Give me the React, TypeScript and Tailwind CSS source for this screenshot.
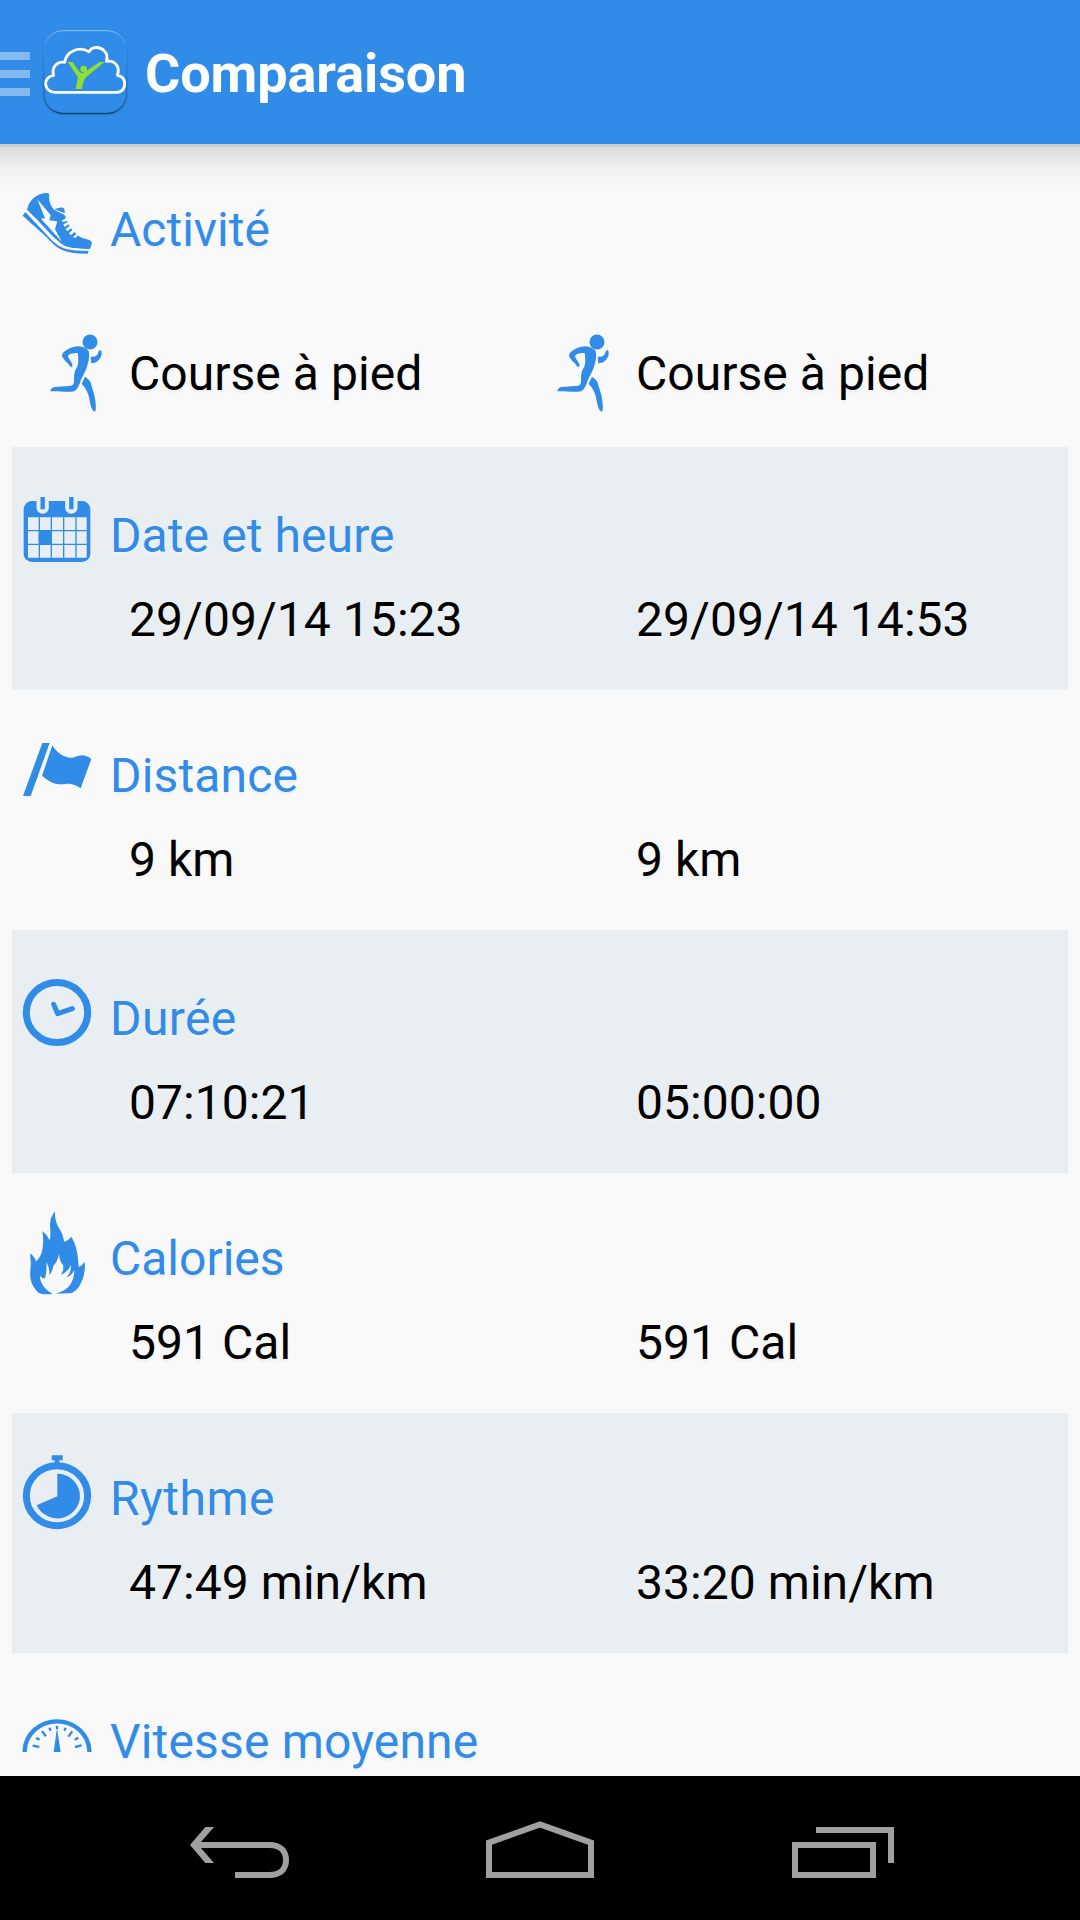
import React from "react";

const BLUE = "#318ce7";

function ShoeIcon() {
  return (
    <svg className="h-[130px] w-[98px] shrink-0" viewBox="36 -78 294 390" fill={BLUE}>
      <path d="M81 120C86 93 108 70 138 69Q148 68 148 74C146 88 149 103 162 119L190 133Q197 136 198 144L184 153L191 156L201 153L204 157L190 163L194 171L206 163L209 168L197 177L202 184L213 175L217 180L207 190L213 196L223 186L229 191L219 202L226 204L234 196C243 205 256 206 268 210Q276 213 275 223L271 235Q269 240 260 239L212 233Q195 231 184 221L158 199L110 148Z" />
      <path d="M163 118L175 114Q190 110 193 117L195 130Z" />
      <path d="M112 88L152 135L148 151L172 154L165 178L186 216L123 146L135 145Z" fill="#f9f9f9" />
      <path d="M76 126L136 190C159 215 174 232 202 238Q232 244 266 242L263 251Q222 252 195 243C172 236 156 220 140 202L68 137Z" />
      <path d="M81 122C105 150 135 184 160 208Q182 232 216 236L272 240" fill="none" stroke="#f9f9f9" strokeWidth="4" />
    </svg>
  );
}

function RunnerIcon() {
  return (
    <svg className="h-[84px] w-[117px] shrink-0" viewBox="36 480 351 252" fill={BLUE}>
      <circle cx="270" cy="516" r="22.5" />
      <path d="M235 529Q256 530 266 543Q270 561 263 583C258 606 247 617 240 638C232 657 227 665 214 665C190 666 165 662 151 664Q151 655 163 651L207 648Q221 648 222 635C223 618 220 607 232 590Q237 574 233 549C217 549 205 552 204 560L217 582Q219 590 215 592Q209 589 203 579Q194 573 187 561Q183 552 195 543Q210 531 235 529Z" />
      <path d="M272 560Q292 563 295 547Q297 539 302 541Q306 543 305 553C302 570 288 580 274 580Z" />
      <path d="M255 620Q273 631 275 648L283 675Q289 703 287 722Q283 728 277 719C270 707 270 689 264 671Q258 654 245 641Z" />
    </svg>
  );
}

function CalendarIcon() {
  return (
    <svg className="h-[130px] w-[98px] shrink-0" viewBox="36 21 294 390" fill="none">
      <rect x="71" y="183" width="200" height="183" rx="25" fill={BLUE} />
      <path d="M84 232H260V353H84Z" fill="#e8eef2" />
      <path d="M118 232V353M154 232V353M191 232V353M228 232V353M84 272H260M84 313H260" stroke={BLUE} strokeWidth="4" />
      <path d="M116 272H156V315H116Z" fill={BLUE} />
      <path d="M128 178V203M214 178V203" stroke="#e8eef2" strokeWidth="37" strokeLinecap="round" />
      <path d="M108 165H148V183H108ZM195 165H233V183H195Z" fill="#e8eef2" />
      <path d="M128 171V208M214 171V208" stroke={BLUE} strokeWidth="13" />
    </svg>
  );
}

function FlagIcon() {
  return (
    <svg className="h-[130px] w-[98px] shrink-0" viewBox="36 -90 294 390" fill={BLUE}>
      <path d="M127 69H149L92 228H69Z" />
      <path d="M157 76C172 101 195 115 218 113C242 104 254 101 274 117L242 205C213 186 203 192 185 193C159 193 142 181 126 167Z" />
    </svg>
  );
}

function ClockIcon() {
  return (
    <svg className="h-[130px] w-[98px] shrink-0" viewBox="36 -60 294 390" fill="none" stroke={BLUE}>
      <ellipse cx="171" cy="187.5" rx="92" ry="90" strokeWidth="21" />
      <path d="M161 163L173 191L217 176" strokeWidth="15" strokeLinecap="round" strokeLinejoin="round" />
    </svg>
  );
}

function FlameIcon() {
  return (
    <svg className="h-[130px] w-[98px] shrink-0" viewBox="36 -51 294 390" fill={BLUE}>
      <path d="M165 64C164 84 168 101 180 119Q190 134 192 156Q206 152 214 140C228 163 234 190 236 231Q249 225 254 215C257 245 250 269 237 290Q223 309 205 310L166 311C198 303 222 286 223 240Q215 257 200 262Q214 247 213 225Q205 245 183 254Q193 238 189 226Q179 214 177 193Q172 217 160 227Q157 247 148 255Q149 232 139 216Q141 245 135 265Q126 266 120 257C119 280 138 302 158 311C138 315 120 313 112 305C94 285 89 267 91 239Q94 222 90 191Q102 196 108 214Q123 201 127 180Q132 151 127 123Q141 133 149 151Q153 134 150 108Q149 83 165 64Z" />
    </svg>
  );
}

function StopwatchIcon() {
  return (
    <svg className="h-[130px] w-[98px] shrink-0" viewBox="36 9 294 390" fill={BLUE}>
      <path d="M155 136H188V151H178V165H164V151H155Z" />
      <ellipse cx="171" cy="257" rx="92" ry="90" fill="none" stroke={BLUE} strokeWidth="21" />
      <path d="M172 191A68 67 0 1 1 110 286L172 259Z" />
    </svg>
  );
}

function GaugeIcon() {
  return (
    <svg className="h-[123px] w-[98px] shrink-0" viewBox="36 9 294 369" fill="none" stroke={BLUE}>
      <path d="M74 306V301C77 252 119 214 171 214C223 214 265 252 268 301V306" strokeWidth="13" />
      <path d="M98 287L118 291M108 264L119 269M126 244L138 259M148 233L152 242M171 227V237M197 233L193 242M217 244L205 260M235 263L224 269M245 286L225 291" strokeWidth="7" />
      <path d="M171 233L182 306H161Z" fill={BLUE} stroke="none" />
    </svg>
  );
}

function AppLogo() {
  return (
    <svg className="h-[90px] w-[86px] shrink-0" viewBox="126 84 258 270" fill="none">
      <defs>
        <linearGradient id="tile-edge" x1="0" y1="0" x2="0" y2="1">
          <stop offset="0" stopColor="#8bbff2" />
          <stop offset="0.18" stopColor="#4294e8" />
          <stop offset="0.5" stopColor="#2c7dce" />
          <stop offset="0.85" stopColor="#2062a3" />
          <stop offset="1" stopColor="#0f3358" />
        </linearGradient>
        <filter id="tile-shadow" x="-10%" y="-10%" width="120%" height="120%">
          <feGaussianBlur stdDeviation="2.5" />
        </filter>
      </defs>
      <rect x="132" y="100" width="247" height="243" rx="58" fill="#174b83" opacity="0.8" filter="url(#tile-shadow)" />
      <rect x="132" y="92" width="247" height="248" rx="58" fill={BLUE} stroke="url(#tile-edge)" strokeWidth="3" />
      <path d="M164 277H350C368 276 375 263 374 249C373 236 365 228 352 226C361 203 347 179 319 184C328 158 305 140 284 143Q273 145 267 155C235 137 199 155 194 187C169 183 154 205 161 226C145 228 136 240 137 253C138 266 150 277 164 277Z" stroke="#fff" strokeWidth="8.5" strokeLinejoin="round" />
      <circle cx="251" cy="207" r="10" fill="#93df31" />
      <path d="M203 186H217L239 216Q245 222 253 217L299 186H313L259 231Q252 237 250 247L245 267H227L233 237Q235 229 229 224Z" fill="#93df31" />
    </svg>
  );
}

type RowProps = {
  icon: React.ReactNode;
  label: string;
  labelClass: string;
  values?: string[];
  rowClass: string;
  valueIcon?: React.ReactNode;
};

function Row({ icon, label, labelClass, values, rowClass, valueIcon }: RowProps) {
  return (
    <section className={"flex flex-col overflow-hidden " + rowClass}>
      <div className="flex h-[130px] shrink-0">
        {icon}
        <h2 className={"mt-[58px] whitespace-nowrap text-[48px] leading-[56px] text-[#318ce7] " + labelClass}>{label}</h2>
      </div>
      {values && (
        <div className={valueIcon ? "mt-14 grid grid-cols-[507px_507px]" : "mt-3 grid grid-cols-[507px_507px] pl-[117px]"}>
          {values.map((v, i) => (
            <div key={i} className="flex whitespace-nowrap text-[48px] leading-[56px] tracking-[0.05px] text-black">
              {valueIcon}
              <span className={valueIcon ? "mt-4" : ""}>{v}</span>
            </div>
          ))}
        </div>
      )}
    </section>
  );
}

export default function App() {
  return (
    <div className="flex h-[1920px] w-[1080px] flex-col overflow-hidden bg-[#f9f9f9] font-['Roboto',sans-serif]">
      <header className="flex h-36 shrink-0 items-start bg-[#318ce7]">
        <div className="mt-[52px] flex w-[30px] flex-col gap-[10px]">
          <div className="h-2 bg-[#83baf0]" />
          <div className="h-2 bg-[#83baf0]" />
          <div className="h-2 bg-[#83baf0]" />
        </div>
        <div className="mt-7 ml-3">
          <AppLogo />
        </div>
        <h1 className="mt-[42px] ml-[17px] text-[54px] leading-[64px] font-bold tracking-[-0.1px] text-white">Comparaison</h1>
      </header>

      <main className="relative h-[1632px] shrink-0 overflow-hidden px-3 [text-shadow:0_3px_1px_#f1f1f1]">
        <div className="absolute inset-x-0 top-0">
          <div className="h-[3px] bg-[#cfcfcf]" />
          <div className="h-[45px] bg-linear-to-b from-black/12 via-black/3 to-transparent" />
        </div>
        <Row icon={<ShoeIcon />} label="Activité" labelClass="" values={["Course à pied", "Course à pied"]} valueIcon={<RunnerIcon />} rowClass="relative h-[303px]" />
        <Row icon={<CalendarIcon />} label="Date et heure" labelClass="pt-[3px] tracking-[0.1px]" values={["29/09/14 15:23", "29/09/14 14:53"]} rowClass="h-[243px] bg-[#e8eef2] [&>div:last-child]:pt-[3px]" />
        <Row icon={<FlagIcon />} label="Distance" labelClass="tracking-[0.15px]" values={["9 km", "9 km"]} rowClass="h-[240px]" />
        <Row icon={<ClockIcon />} label="Durée" labelClass="pt-[3px] tracking-[0.4px]" values={["07:10:21", "05:00:00"]} rowClass="h-[243px] bg-[#e8eef2] [&>div:last-child]:pt-[3px]" />
        <Row icon={<FlameIcon />} label="Calories" labelClass="" values={["591 Cal", "591 Cal"]} rowClass="h-[240px]" />
        <Row icon={<StopwatchIcon />} label="Rythme" labelClass="tracking-[0.5px]" values={["47:49 min/km", "33:20 min/km"]} rowClass="h-[240px] bg-[#e8eef2]" />
        <Row icon={<GaugeIcon />} label="Vitesse moyenne" labelClass="pt-[3px] tracking-[0.18px]" rowClass="h-[123px]" />
      </main>

      <nav className="flex h-36 shrink-0 items-start bg-black" aria-label="Navigation">
        <svg className="mt-[44px] ml-[186px] h-[64px] w-[108px]" viewBox="78 120 324 192" fill="none">
          <path d="M110 195H328C360 195 378 212 378 240C378 268 360 285 328 285H225" stroke="#a0a0a0" strokeWidth="18" />
          <path d="M136 141H162L115 195L162 249H136L90 195Z" fill="#a0a0a0" />
        </svg>
        <svg className="mt-[44px] ml-[188px] h-[64px] w-[116px]" viewBox="966 120 348 192" fill="none">
          <path d="M987 188L1140 133L1293 188V285H987Z" stroke="#a0a0a0" strokeWidth="18" />
        </svg>
        <svg className="mt-[44px] ml-[190px] h-[64px] w-[110px]" viewBox="564 120 330 192" fill="none" stroke="#a0a0a0" strokeWidth="18">
          <path d="M585 195H819V285H585ZM648 150H873V249" />
        </svg>
      </nav>
    </div>
  );
}
